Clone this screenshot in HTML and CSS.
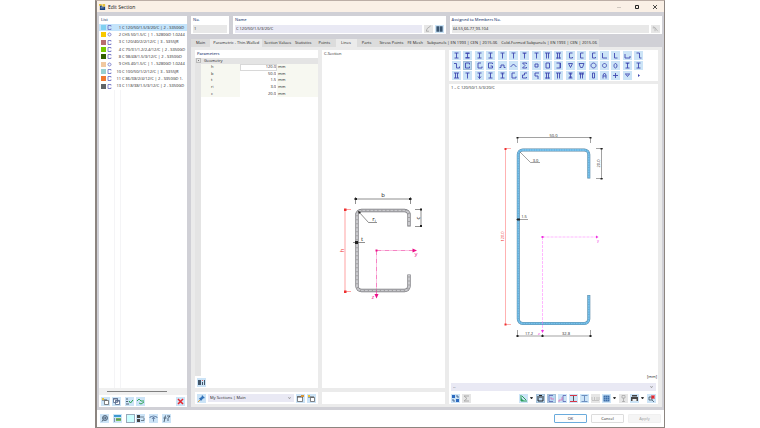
FILE: index.html
```html
<!DOCTYPE html>
<html lang="en">

<head>
    <meta charset="UTF-8">
    <meta name="viewport" content="width=device-width, initial-scale=1.0">
    <title>Edit Section</title>
    <link rel="stylesheet" href="styles.css">
</head>

<body>
    <div class="dialog">
        <header class="titlebar">
            <svg class="logo" viewBox="0 0 8 8"><path fill="#1d4380" d="M1 2h2v2h4v4H1z"/><path fill="#e8c23a" d="M0 1h3v2H0zM4 1h3v3H4z"/><path fill="#fff" d="M2 5h1v1H2zM4 5h1v1H4z"/></svg>
            <h1>Edit Section</h1>
            <div class="window-buttons">
                <button aria-label="Minimize" class="faint"><svg viewBox="0 0 6 6"><path d="M1 3.5h4"/></svg></button>
                <button aria-label="Maximize"><svg viewBox="0 0 6 6"><path d="M1.5 1.5h3v3h-3z"/></svg></button>
                <button aria-label="Close"><svg viewBox="0 0 6 6"><path stroke-width=".8" d="M1 1l4 4M5 1l-4 4"/></svg></button>
            </div>
        </header>

        <main class="content">
            <aside class="list-panel">
                <h2>List</h2>
                <ul class="section-list" id="section-list"></ul>
                <div class="list-space"></div>
                <div class="scrollbar"><span></span></div>
                <div class="tools list-tools">
                    <button class="tool" aria-label="New section"><svg viewBox="0 0 9 9"><path fill="#fff" stroke="#555" stroke-width=".7" d="M3.5 3.5h4v4h-4z"/><path stroke="#555" d="M1 3h5"/><path fill="#e8c23a" d="M1 1h2v2H1z"/></svg></button>
                    <button class="tool gap" aria-label="Copy section"><svg viewBox="0 0 9 9"><path fill="#fff" stroke="#56688a" stroke-width=".8" d="M1.5 1.5h4v4h-4zM3.5 3.5h4v4h-4z"/><path stroke="#56688a" d="M1 2h5M3 4h5"/></svg></button>
                    <button class="tool" aria-label="Select all"><svg viewBox="0 0 9 9"><path stroke="#456" stroke-width=".9" d="M1 2h2M1 4.5h2M1 7h3"/><path stroke="#25a04a" d="M4 4l1.5 2L8 3"/></svg></button>
                    <button class="tool" aria-label="Invert selection"><svg viewBox="0 0 9 9"><path stroke="#25a04a" stroke-width=".9" d="M1 4l2-2 2 2h3M3 6l2 1 3-2"/></svg></button>
                    <button class="tool last" aria-label="Delete"><svg viewBox="0 0 9 9"><path stroke="#e8262c" stroke-width="1.5" d="M2 2l5 5M7 2L2 7"/></svg></button>
                </div>
            </aside>

            <div class="editor">
                <div class="fields">
                    <div class="field field-no">
                        <label for="no">No.</label>
                        <div class="field-row"><input id="no" class="grey" value="1"></div>
                    </div>
                    <div class="field">
                        <label for="name">Name</label>
                        <div class="field-row">
                            <input id="name" value="C 120/50/1.5/3/20/C">
                            <button class="tool off" aria-label="Edit name"><svg viewBox="0 0 9 9"><path stroke="#999" stroke-width=".8" d="M2 7l1-3 4-3M2 7h3"/></svg></button>
                            <button class="tool" aria-label="Library"><svg viewBox="0 0 9 9"><path fill="#38536e" d="M1 1.500h3.200v6H1zM4.800 1.500H8v6H4.800z"/></svg></button>
                        </div>
                    </div>
                    <div class="field">
                        <label for="members">Assigned to Members No.</label>
                        <div class="field-row">
                            <input id="members" class="grey" value="44-55,66-77,93-104">
                            <button class="tool off" aria-label="Pick members"><svg viewBox="0 0 9 9"><path stroke="#aaa" stroke-width=".8" d="M2 2l2 1M4 3l3 4M4 3v4M2 2v2"/></svg></button>
                        </div>
                    </div>
                </div>

                <nav class="tabs" role="tablist">
                    <button role="tab">Main</button>
                    <button role="tab" class="active" aria-selected="true">Parametric - Thin-Walled</button>
                    <button role="tab">Section Values</button>
                    <button role="tab">Statistics</button>
                    <button role="tab" class="wide">Points</button>
                    <button role="tab" class="wide active">Lines</button>
                    <button role="tab" class="wide">Parts</button>
                    <button role="tab">Stress Points</button>
                    <button role="tab">FE Mesh</button>
                    <button role="tab">Subpanels | EN 1993 | CEN | 2015-06</button>
                    <button role="tab">Cold-Formed Subpanels | EN 1993 | CEN | 2015-06</button>
                </nav>

                <div class="pane">
                    <div class="column">
                        <section class="panel grow">
                            <h2>Parameters</h2>
                            <div class="tree">
                                <div class="tree-head"><span class="expander"></span>Geometry</div>
                                <table class="params">
                                    <tr><th><label for="p-h">h</label></th><td class="selected"><input id="p-h" value="120.0"></td><td>mm</td></tr>
                                    <tr><th><label for="p-b">b</label></th><td><input id="p-b" value="50.0"></td><td>mm</td></tr>
                                    <tr><th><label for="p-t">t</label></th><td><input id="p-t" value="1.5"></td><td>mm</td></tr>
                                    <tr><th><label for="p-r">r<sub>i</sub></label></th><td><input id="p-r" value="3.0"></td><td>mm</td></tr>
                                    <tr><th><label for="p-c">c</label></th><td><input id="p-c" value="20.0"></td><td>mm</td></tr>
                                </table>
                            </div>
                            <div class="tools">
                                <button class="tool" aria-label="Show values"><svg viewBox="0 0 9 9"><path fill="#41566b" d="M1 2h3v5H1zM5 4h1v3H5zM7 2h1v5H7z"/><path fill="#d66" d="M5 2h1v1H5z"/></svg></button>
                            </div>
                        </section>
                        <section class="panel favorites">
                            <button class="tool" aria-label="Favorites"><svg viewBox="0 0 9 9"><path stroke="#e2a233" d="M1 8l3-3"/><path fill="#3272b8" d="M5 1l3 3-2 .5L4 7 2 4.500 4.500 3z"/></svg></button>
                            <div class="combo">
                                <select aria-label="Section collection"><option>My Sections | Main</option></select>
                            </div>
                            <button class="tool" aria-label="Edit collection"><svg viewBox="0 0 9 9"><path fill="#fff" stroke="#555" stroke-width=".7" d="M1.500 2.500h5v5h-5z"/><path stroke="#555" d="M1 3h6"/><path fill="#d9963a" d="M5 1h3v2H5z"/></svg></button>
                            <button class="tool" aria-label="Add to collection"><svg viewBox="0 0 9 9"><path fill="#fff" stroke="#555" stroke-width=".7" d="M3.500 3.500h4v4h-4z"/><path stroke="#555" d="M1 3h6"/><path fill="#e8c23a" d="M1 1h2v2H1z"/></svg></button>
                        </section>
                    </div>

                    <div class="column">
                        <section class="panel grow">
                            <h3>C-Section</h3>
                            <svg class="drawing" viewBox="322 58 123 330">
                                <path stroke="#77777c" stroke-width="3.400" d="M409 226.500V215a4.500 4.500 0 0 0-4.500-4.500H361.500a4.500 4.500 0 0 0-4.500 4.500V286a4.500 4.500 0 0 0 4.500 4.500H404.500a4.500 4.500 0 0 0 4.500-4.500V274.500"/>
                                <path stroke="#c8c8cc" stroke-width="2.200" d="M409 226V215a4.500 4.500 0 0 0-4.500-4.500H361.500a4.500 4.500 0 0 0-4.500 4.500V286a4.500 4.500 0 0 0 4.500 4.500H404.500a4.500 4.500 0 0 0 4.500-4.500V275"/>
                                <path stroke="#999" stroke-width="1.600" stroke-dasharray="1 3" d="M409 226V215a4.500 4.500 0 0 0-4.500-4.500H361.500a4.500 4.500 0 0 0-4.500 4.500V286a4.500 4.500 0 0 0 4.500 4.500H404.500a4.500 4.500 0 0 0 4.500-4.500V275"/>
                                <g class="dim">
                                    <path d="M355.500 199H410.500M355.500 197v7M410.500 197v7M421 209.500V226M415 209.500h7M415 226.500h7M359 212l9.500 10.500H377M353 242.500H365"/>
                                    <path class="mark" d="M354.500 198h2.500v2h-2.500zM409 198h2.500v2H409zM420 208.500h2v2h-2zM420 225h2v2h-2zM355 241h3v3h-3zM358 211l3 1-2 2z"/>
                                    <text x="383" y="197">b</text>
                                    <text x="374" y="221">r<tspan font-size="4" dy="1">i</tspan></text>
                                    <text x="362" y="241">t</text>
                                    <text transform="translate(419.500 218) rotate(-90)">c</text>
                                </g>
                                <g class="dim red">
                                    <path d="M345 209.500V291.500M344 209.500h7M344 291.500h7"/>
                                    <path class="mark" d="M344 208.500h2.500v2.500H344zM344 290.500h2.500v2.500H344z"/>
                                    <text transform="translate(343.500 250.500) rotate(-90)">h</text>
                                </g>
                                <g class="dim pink">
                                    <path stroke-dasharray="5 1 1 1" d="M376.500 250.500H413M376.500 250.500V294"/>
                                    <path class="mark" d="M412.500 248.500l4.500 2-4.500 2zM374.500 294h4l-2 4.500zM375.500 249.500h2v2h-2z"/>
                                    <text x="416" y="256">y</text>
                                    <text x="373" y="299">z</text>
                                </g>
                            </svg>
                        </section>
                        <section class="panel favorites"></section>
                    </div>

                    <div class="column column-right">
                        <section class="panel shapes" id="shapes"></section>
                        <section class="panel grow">
                            <h3>1 – C 120/50/1.5/3/20/C</h3>
                            <svg class="drawing" viewBox="449 92 209 282">
                                <path stroke="#5b88a3" stroke-width="3" d="M588.800 178.500V154.500a4.500 4.500 0 0 0-4.500-4.500H522.800a4.500 4.500 0 0 0-4.500 4.500V319a4.500 4.500 0 0 0 4.500 4.500H584.300a4.500 4.500 0 0 0 4.500-4.500V295"/>
                                <path stroke="#78c2ec" stroke-width="2" d="M588.800 178V154.500a4.500 4.500 0 0 0-4.500-4.500H522.800a4.500 4.500 0 0 0-4.500 4.500V319a4.500 4.500 0 0 0 4.500 4.500H584.300a4.500 4.500 0 0 0 4.500-4.500V295.500"/>
                                <path stroke="#5fa9d6" stroke-width="1.600" stroke-dasharray=".8 1.700" d="M588.800 178V154.500a4.500 4.500 0 0 0-4.500-4.500H522.800a4.500 4.500 0 0 0-4.500 4.500V319a4.500 4.500 0 0 0 4.500 4.500H584.300a4.500 4.500 0 0 0 4.500-4.500V295.500"/>
                                <g class="dim small">
                                    <path d="M517.500 137.500H590.500M517.500 137v6M590.500 137v6M601.500 148.500V178.500M596 148.500h7M596 178.500h7M520 152l10.500 10.500H540M516 219.500H528M517.500 336H590.500M517.500 330v7M542.500 334v3M590.500 330v7"/>
                                    <path class="mark" d="M516.500 137h2v1.500h-2zM589.500 137h2v1.500h-2zM600.500 148h2v1.500h-2zM600.500 178h2v1.500h-2zM517 218.500h3v2h-3zM516.500 335h2v2h-2zM541.500 335h2v2h-2zM589.500 335h2v2h-2z"/>
                                    <text x="553.500" y="136.500">50.0</text>
                                    <text x="535.500" y="161.500">3.0</text>
                                    <text x="524" y="218">1.5</text>
                                    <text x="529" y="335">17.2</text>
                                    <text x="566" y="335">32.8</text>
                                    <text transform="translate(600 163.500) rotate(-90)">20.0</text>
                                </g>
                                <g class="dim small red">
                                    <path d="M505.500 148.500V324.500M505 148.500h6M505 324.500h6"/>
                                    <path class="mark" d="M504.500 148h2v2h-2zM504.500 323.500h2v2h-2z"/>
                                    <text transform="translate(504 236.500) rotate(-90)">120.0</text>
                                </g>
                                <g class="dim small magenta">
                                    <path stroke-dasharray="3 1" d="M542.500 237H597M542.500 237V331"/>
                                    <path class="mark" d="M596 235.500l2.500 1.500-2.500 1.500zM541 330h3l-1.500 3zM541.500 236h2v2h-2z"/>
                                    <text x="598" y="242">y</text>
                                    <text x="539" y="335">z</text>
                                </g>
                            </svg>
                            <div class="unit">[mm]</div>
                            <div class="combo result-combo">
                                <select aria-label="Result"><option>--</option></select>
                            </div>
                            <div class="tools view-tools">
                                <button class="tool" aria-label="Export"><svg viewBox="0 0 9 9"><path fill="#2c6ac0" d="M1 1h3v3H1zM5 5h3v3H5z"/><path stroke="#4a6b96" d="M2 5v2h2M5 2h2v2"/></svg></button>
                                <button class="tool off" aria-label="Sum"><svg viewBox="0 0 9 9"><path stroke="#aaa" d="M7 2H2l3 2.500L2 7h5"/></svg></button>
                                <button class="tool last" aria-label="Coordinate system"><svg viewBox="0 0 9 9"><path stroke="#2aa05a" d="M2 1v6h6M3 2l4 4"/><path fill="#2aa05a" d="M2 4l3 3H2z"/></svg></button>
                                <span class="drop"></span>
                                <button class="tool picked" aria-label="Dimensions"><svg viewBox="0 0 9 9"><path stroke="#222" d="M1 3h7M2 4v3h5V4M3 1.500h3"/></svg></button>
                                <button class="tool picked" aria-label="Stress points"><svg viewBox="0 0 9 9"><path stroke="#5660b0" stroke-width=".8" d="M6 1.500H2v6h4"/><path stroke="#e06ab0" stroke-width=".8" d="M4 3v2h3"/></svg></button>
                                <button class="tool" aria-label="Axes"><svg viewBox="0 0 9 9"><path stroke="#5660b0" stroke-width=".8" d="M8 1.500H5v6h3"/><path stroke="#e06ab0" stroke-width=".8" d="M4 3v3H1v2"/></svg></button>
                                <button class="tool" aria-label="Parts"><svg viewBox="0 0 9 9"><path stroke="#d93648" d="M1 1.500h7M1 7.500h7"/><path stroke="#555" d="M4.500 2v5"/></svg></button>
                                <button class="tool" aria-label="Lines"><svg viewBox="0 0 9 9"><path stroke="#6d8fc0" d="M1.500 1.500h6M1.500 7.500h6M4.500 2v5"/></svg></button>
                                <button class="tool off" aria-label="Values"><svg viewBox="0 0 9 9"><path stroke="#bbb" stroke-width=".8" d="M1 3v3M3.500 3v3M6 3v3M8 3v3M1 6.500h7"/></svg></button>
                                <button class="tool" aria-label="Grid"><svg viewBox="0 0 9 9"><path fill="#3d6ea8" d="M1.500 1.500h6v6h-6z"/><path stroke="#9cc3ea" stroke-width=".4" d="M1.500 3.500h6M1.500 5.500h6M3.500 1.500v6M5.500 1.500v6"/></svg></button>
                                <span class="drop"></span>
                                <button class="tool off" aria-label="Info"><svg viewBox="0 0 9 9"><path stroke="#aaa" stroke-width=".8" d="M3 1.500h3v2.500H3zM4.500 4v4M3 7.500h3"/></svg></button>
                                <button class="tool" aria-label="Print"><svg viewBox="0 0 9 9"><path fill="#444" d="M1 3h7v4H1zM2 1h5v1.500H2z"/><path fill="#eee" d="M2.500 5h4v2h-4z"/></svg></button>
                                <span class="drop"></span>
                                <button class="tool" aria-label="Reset view"><svg viewBox="0 0 9 9"><path stroke="#456" stroke-width=".8" d="M2 3h3v3H2zM5 6l2 2"/><path stroke="#e8262c" stroke-width="1.500" d="M4.500 1.500l3 3M7.500 1.500l-3 3"/></svg></button>
                            </div>
                        </section>
                    </div>
                </div>
            </div>
        </main>

        <footer class="footer">
            <button class="tool" aria-label="Comment"><svg viewBox="0 0 9 9"><path stroke="#41566b" d="M2 7.500l1.500-2"/><circle cx="5" cy="4" r="2.500" fill="#9bb4cc" stroke="#41566b" stroke-width=".8"/><path stroke="#41566b" stroke-width=".7" d="M4 3v2M5.500 3v2"/></svg></button>
            <button class="tool" aria-label="Units"><svg viewBox="0 0 9 9"><path fill="#3c9ad0" d="M1 1h7v2H1z"/><path fill="#7bbf5a" d="M3 4h5v3H3z"/><path stroke="#567" stroke-width=".6" d="M1.500 4v4M3 5.500h5"/></svg></button>
            <button class="tool swatch-tool" aria-label="Colour"></button>
            <button class="tool" aria-label="Structure"><svg viewBox="0 0 9 9"><path fill="#444" d="M1 1h3v3H1zM1 5h3v3H1z"/><path stroke="#567" stroke-width=".8" d="M4 3h4M5 6.500h3V4"/></svg></button>
            <button class="tool" aria-label="Views"><svg viewBox="0 0 9 9"><path stroke="#537098" stroke-width=".8" d="M1 3q3.500-2 7 0M1 3v1M8 3v1M4.500 3v4.500M3 5l1.500-2L6 5"/></svg></button>
            <button class="tool" aria-label="Script"><svg viewBox="0 0 9 9"><path stroke="#41566b" stroke-width=".9" d="M4 1.500q-1 0-1 2L2 8M1.500 4h3M5 2h3L6 4.500V7"/></svg></button>
            <div class="actions">
                <button class="action primary">OK</button>
                <button class="action">Cancel</button>
                <button class="action" disabled>Apply</button>
            </div>
        </footer>
    </div>

    <script src="script.js"></script>
</body>

</html>
```
FILE: styles.css
```css
*, *::before, *::after {
    box-sizing: border-box;
}

body {
    margin: 0;
    background: #fff;
    color: #1c1c1c;
    font-family: "Open Sans", "Noto Sans", sans-serif;
    font-size: 4px;
    line-height: 6px;
}

h1, h2, h3, ul {
    margin: 0;
    padding: 0;
    font-size: 4px;
    font-weight: 400;
    list-style: none;
}

button, input, select {
    margin: 0;
    padding: 0;
    border: 0;
    border-radius: 0;
    background: none;
    color: inherit;
    font: inherit;
    line-height: 6px;
}

svg {
    display: block;
    fill: none;
}

.dialog {
    display: flex;
    flex-direction: column;
    width: 75%;
    min-height: 100vh;
    margin: 0 auto;
    border: 1px solid #8c8580;
    border-top-color: #bcaea6;
    border-left-width: 2px;
    background: #d0d0d6;
}

/* Title bar */
.titlebar {
    display: flex;
    align-items: center;
    height: 11px;
    padding: 0 2px;
    background: #faf0e6;
}

.titlebar h1 {
    margin-left: 2px;
    font-size: 5px;
    color: #111;
}

.logo {
    width: 7px;
    height: 7px;
}

.window-buttons {
    display: flex;
    gap: 12px;
    margin-left: auto;
    padding-right: 4px;
}

.window-buttons svg {
    width: 6px;
    height: 6px;
    stroke: #222;
}

.window-buttons .faint svg {
    stroke: #d0c8c0;
}

.content {
    flex: 1;
    display: flex;
    gap: 4px;
    padding: 4px 2px 3px;
}

h2, .field label {
    font-weight: 600;
    color: #3f5584;
}

/* Section list */
.list-panel {
    display: flex;
    flex-direction: column;
    flex: 0 0 88px;
    background: #fff;
}

.list-panel h2 {
    padding: 1px 2px;
}

.section-list {
    display: grid;
    grid-auto-rows: 1fr;
    height: 66px;
}

.section-list li {
    display: grid;
    grid-template-columns: 5px 5px 8px max-content;
    align-items: center;
    gap: 1px;
    padding-left: 2px;
    white-space: nowrap;
}

.section-list .selected {
    background: #c4e4fb;
}

.section-list svg {
    width: 5px;
    height: 5px;
    stroke: #6668c0;
    stroke-width: .8;
}

.section-list .number {
    text-align: right;
}

.swatch {
    width: 5px;
    height: 5px;
}

.list-space {
    flex: 1;
    margin-left: 15px;
    width: 7px;
    border: solid #f4f4f6;
    border-width: 0 1px;
}

.scrollbar {
    height: 7px;
    padding: 3px 20px 0 8px;
    background: #f0f0f0;
}

.scrollbar span {
    display: block;
    height: 1px;
    background: #808080;
}

/* Small icon buttons */
.tools {
    display: flex;
    align-items: center;
    gap: 2px;
    padding: 0 2px;
    height: 12px;
}

.tool {
    flex: none;
    width: 9px;
    height: 9px;
    background: #cce4f7;
}

.tool svg {
    width: 9px;
    height: 9px;
}

.tool.off {
    background: #e6e6e6;
}

.tool.picked {
    background: #b8d8f2;
    outline: 1px solid #a4c0d8;
    outline-offset: -1px;
}

.tool.gap {
    margin-right: 2px;
}

.tool.last {
    margin-left: auto;
}

/* Header fields */
.editor {
    flex: 1;
    min-width: 0;
    display: flex;
    flex-direction: column;
}

.fields {
    display: flex;
    gap: 4px;
    margin-bottom: 5px;
}

.field {
    flex: 1;
    min-width: 0;
    height: 18px;
    padding: 1px 2px;
    background: #fff;
}

.field-no {
    flex: 0 0 38px;
}

.field label {
    display: block;
    height: 8px;
}

.field-row {
    display: flex;
    gap: 2px;
    height: 8px;
}

.field input {
    flex: 1;
    min-width: 0;
    padding: 0 1px;
    background: #e9e9f4;
}

.field input.grey {
    background: #e8e8e8;
}

.field .tool, .field .tool svg {
    height: 8px;
}

/* Tabs */
.tabs {
    display: flex;
    align-self: flex-start;
    max-width: 100%;
    height: 8px;
    background: #dcdcdc;
}

.tabs button {
    padding: 0 2px;
    white-space: nowrap;
}

.tabs button:first-child {
    padding: 0 5px;
}

.tabs .active {
    padding: 0 3px;
    background: #ebebeb;
}

.tabs .wide {
    padding: 0 6px 0 5px;
}

.pane {
    flex: 1;
    display: flex;
    gap: 4px;
    padding: 3px 4px;
    background: #ebebeb;
}

.column {
    flex: 123;
    min-width: 0;
    display: flex;
    flex-direction: column;
    gap: 4px;
}

.column-right {
    flex: 209;
    gap: 3px;
}

.panel {
    background: #fff;
}

.grow {
    flex: 1;
    display: flex;
    flex-direction: column;
}

.panel h2, .panel h3 {
    padding: 1px 2px;
}

/* Parameter tree */
.tree {
    flex: 1;
    border-left: 6px solid #e4e4e4;
}

.tree-head {
    display: flex;
    gap: 3px;
    height: 6px;
    margin-left: -6px;
    padding-left: 1px;
    background: #e4e4e4;
}

.expander {
    width: 5px;
    height: 5px;
    padding: 1px;
    border: 1px solid #bbb;
}

.expander::before {
    content: "";
    display: block;
    height: 1px;
    background: #777;
}

.params {
    width: 100%;
    height: 33px;
    border-collapse: collapse;
    table-layout: fixed;
    background: #f7f8f1;
}

.params th {
    width: 39px;
    padding: 0 0 0 10px;
    font-weight: 400;
    text-align: left;
}

.params td {
    padding: 0 1px;
}

.params td:nth-child(2) {
    width: 37px;
    background: #fff;
}

.params .selected {
    outline: 1px solid #d8d8d8;
    outline-offset: -1px;
}

.params input {
    display: block;
    width: 100%;
    height: 6px;
    text-align: right;
}

.params sub {
    font-size: 3px;
    line-height: 0;
    vertical-align: baseline;
}

.favorites {
    display: flex;
    align-items: center;
    gap: 2px;
    height: 12px;
    padding: 0 2px;
}

.combo {
    position: relative;
    flex: 1;
    height: 8px;
    background: #e9e9f4;
}

.combo select {
    display: block;
    width: 100%;
    height: 8px;
    padding: 0 2px;
    appearance: none;
}

.combo::after {
    content: "";
    position: absolute;
    top: 2px;
    right: 3px;
    width: 3px;
    height: 3px;
    border: solid #999;
    border-width: 0 1px 1px 0;
    transform: rotate(45deg) scale(.7);
}

/* Shape picker */
.shapes {
    display: grid;
    grid-template-columns: repeat(17, 9px);
    justify-content: space-between;
    row-gap: 1px;
    padding: 1px 15px 1px 3px;
}

.shapes .tool svg {
    stroke: #4048b0;
    stroke-width: .9;
}

.shapes .tool.more {
    background: none;
}

.shapes .tool.more svg {
    fill: #4048b0;
    stroke: none;
}

/* Section drawings */
.drawing {
    flex: 1;
    width: 100%;
    min-height: 200px;
}

.dim {
    stroke: #444;
    stroke-width: .6;
    color: #222;
}

.dim text {
    fill: currentColor;
    stroke: none;
    font-size: 6px;
    text-anchor: middle;
}

.dim .mark {
    fill: currentColor;
    stroke: none;
}

.dim.small {
    stroke-width: .5;
}

.dim.small text {
    font-size: 4px;
}

.dim.red {
    stroke: #ff6464;
    color: #ee3030;
}

.dim.pink {
    stroke: #f0309c;
    color: #ec1088;
}

.dim.magenta {
    stroke: #ff70ff;
    color: #f030e0;
}

.unit {
    padding-right: 1px;
    text-align: right;
}

.result-combo {
    flex: none;
    margin: 3px 2px 1px;
}

.drop {
    width: 3px;
    margin-right: 1px;
    border: solid transparent;
    border-width: 2px 1px 0;
    border-top-color: #333;
}

/* Footer */
.footer {
    display: flex;
    align-items: center;
    gap: 4px;
    height: 17px;
    padding: 0 3px;
    background: #fff;
}

.swatch-tool {
    margin-right: -3px;
    border: 1px solid #9ab;
    background: #ccffff;
}

.actions {
    display: flex;
    gap: 4px;
    margin-left: auto;
}

.action {
    width: 33px;
    height: 9px;
    border: 1px solid #dcdcdc;
    border-radius: 1px;
    background: #fdfdfd;
}

.action.primary {
    border-color: #6aabdc;
}

.action:disabled {
    border-color: #f0f0f0;
    background: #f5f5f5;
    color: #999;
}
```
FILE: script.js
```js
const sections = [
    [1, '#80d0f0', 'C', 'C 120/50/1.5/3/20/C | 2 - S350GD'],
    [2, '#f8c800', 'O', 'CHS 50/1.5/C | 1 - S280GD 1.0244'],
    [3, '#b86c70', 'C', 'C 120/40/2/2/12/C | 3 - S355JR'],
    [4, '#78c800', 'C', 'C 70/31/1.2/2.4/12/C | 2 - S350GD'],
    [8, '#306000', 'C', 'C 98/48/1.5/3/12/C | 2 - S350GD'],
    [9, '#f0c8a0', 'O', 'CHS 40/1.5/C | 1 - S280GD 1.0244'],
    [10, '#98d0d0', 'C', 'C 100/50/1/2/12/C | 3 - S355JR'],
    [11, '#f07830', 'C', 'C 86/38/2/4/12/C | 2 - S350GD 1.'],
    [13, '#606468', 'C', 'C 118/38/1.5/3/12/C | 2 - S350GD']
];

const listIcons = {
    C: 'M4 1.500V.500H1v4h3v-1',
    O: 'M2.500 1a1.500 1.500 0 1 0 .01 0z'
};

// stroke paths on a 9x9 grid, in picker order
const I = 'M2.500 2h4M4.500 2v5M2.500 7h4';
const T = 'M2.500 2h4M4.500 2v5.500';
const PI = 'M2 2h5M3.500 2v5.500M5.500 2v5.500';
const C = 'M6.500 2h-3v5h3';
const CL = 'M6.500 3.500V2h-4v5h4V5.500';
const shapes = [
    I, I + 'M2.500 2.400h4M2.500 6.600h4', I, I, T, T, 'M2.500 2h4M3.500 2.500h2M4.500 2v5.500', T,
    PI, PI + 'M2 7h5', C + 'V6', C, C + 'V6', 'M2.500 2v5h4.500', 'M3.500 2v5h3', 'M2 3v4h5V5', 'M2.500 2h3v5h2',
    'M2 2.500h2.500v4.500H7.500V5.500', CL, 'M6 2H3v5h4V5.500', 'M6.500 3V2h-4v5h4V5H4.500', 'M1.500 6.500H3V4h3v2.500h1.500', 'M1.500 6l3-3 3 3', 'M6.500 3V2h-4l2.500 2.500L2.500 7h4V6',
    'M3 3h3v3H3z', 'M3 2h3.500v5H3z', 'M2.500 2h4v5h-4M6 2v5', 'M2.500 2.500h4L4.500 6.500z', 'M2 2.500h5L5.500 6.500h-2z',
    'M4.500 2a2.500 2.500 0 1 0 .01 0z', 'M4.500 2.500a2 2 0 1 0 .01 0z', 'M4.500 2.500c-2 0-2 4.500 0 4.500s2-4.500 0-4.500z', I + 'M3.500 2.500h2', I,
    'M2 2h5M2 7h5M3.500 2v5M5.500 2v5', T, T + 'M3 5.500l1.500 2 1.500-2', I, I + 'M3.500 3h2', 'M6 2H3v5h4V5.500', 'M7 2H4.500v2H2.500v3h4V6', 'M7 2H3v3h3v3',
    PI + 'M2 7h5', PI, I + 'M3 3h3M3 6h3', PI + 'M2 3h5', 'M3.500 2h2v5h-2z', 'M3 7.500V4l1.500-2L6 4v3.500M3 5h3', 'M2 4.500h5M4.500 2v5', 'M2 3h5M3 3.500l1.500 2 1.500-2', 'M4 3l2 1.500L4 6z'
];

const list = document.getElementById('section-list');
sections.forEach(([number, color, icon, name], index) => {
    const item = document.createElement('li');
    if (index === 0) item.className = 'selected';
    item.innerHTML = `<span class="swatch" style="background:${color}"></span>
        <svg viewBox="0 0 5 5"><path d="${listIcons[icon]}"/></svg>
        <span class="number">${number}</span><span>${name}</span>`;
    list.appendChild(item);
});

const picker = document.getElementById('shapes');
shapes.forEach((d, index) => {
    const button = document.createElement('button');
    button.className = 'tool';
    if (index === 18) button.classList.add('picked');
    if (index === shapes.length - 1) button.classList.add('more');
    button.setAttribute('aria-label', `Shape ${index + 1}`);
    button.innerHTML = `<svg viewBox="0 0 9 9"><path d="${d}"/></svg>`;
    picker.appendChild(button);
});
```
